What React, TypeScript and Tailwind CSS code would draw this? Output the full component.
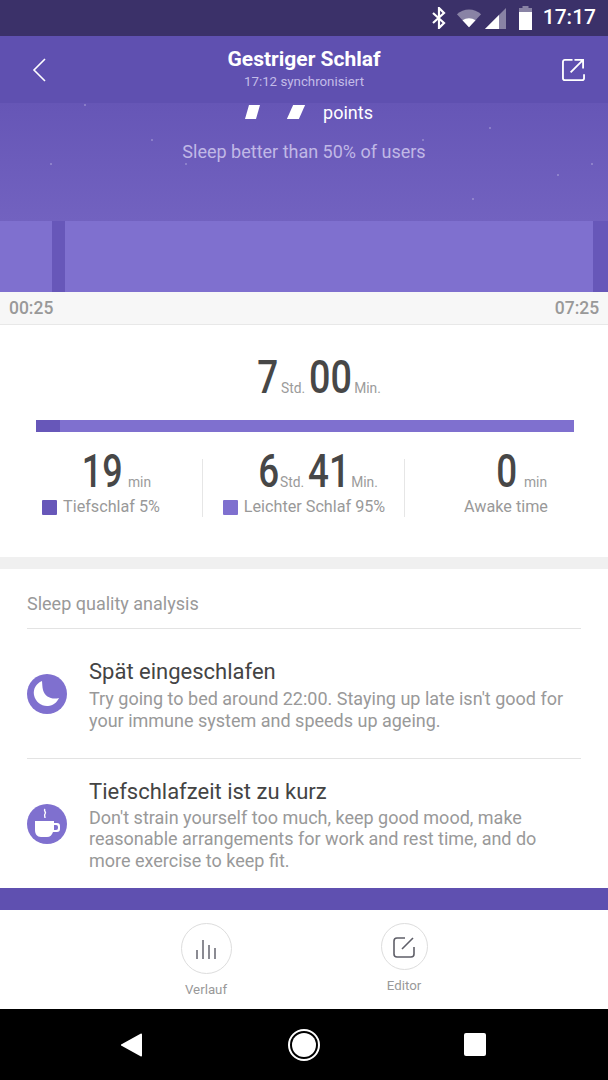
import React from "react";

const stars = [
  [84, 1],
  [50, 60],
  [151, 36],
  [185, 60],
  [422, 36],
  [489, 24],
  [557, 71],
  [591, 60],
  [472, 95],
];

const Num = ({ children, cls }: { children: React.ReactNode; cls: string }) => (
  <span className={`${cls} inline-block text-center text-[46px] leading-none font-medium text-[#474747]`}>
    {children}
  </span>
);

const Unit = ({ children, cls = "" }: { children: React.ReactNode; cls?: string }) => (
  <span className={`${cls} text-[15px] leading-none text-[#9b9b9b] scale-x-[0.92]`}>{children}</span>
);

const StatusIcons = () => (
  <div className="flex items-center gap-[5px] mr-[10px]">
    <svg width="14" height="22" viewBox="0 0 14 22" fill="none" stroke="white" strokeWidth="2.2" className="mr-[5px]">
      <path d="M1 6l11 10-5 5V1l5 5L1 16" />
    </svg>
    <svg width="26" height="20" viewBox="0 0 28 20">
      <path d="M1 6C8-1 20-1 27 6L14 20Z" fill="#fff" fillOpacity="0.4" />
      <path d="M7 12.500C11 9.500 17 9.500 21 12.500L14 20Z" fill="#fff" />
    </svg>
    <svg width="21" height="21" viewBox="0 0 21 21" className="-ml-[2px]">
      <path d="M21 0V21H0Z" fill="#fff" fillOpacity="0.4" />
      <path d="M14 7V21H0Z" fill="#fff" />
    </svg>
    <svg width="15" height="24" viewBox="0 0 15 24" className="ml-[7px]">
      <path d="M4.500 0H10.500V2H14V24H1V2H4.500Z" fill="#fff" fillOpacity="0.4" />
      <path d="M1 6H14V24H1Z" fill="#fff" />
    </svg>
  </div>
);

export default function App() {
  return (
    <div className="flex flex-col w-[608px] h-[1080px] bg-white overflow-hidden font-['Roboto',sans-serif]">
      {/* status bar */}
      <div className="flex items-center justify-end h-[36px] bg-[#3b3169] pr-[12px]">
        <StatusIcons />
        <span className="text-[21px] font-medium text-white">17:17</span>
      </div>

      {/* header */}
      <div className="relative z-10 grid grid-cols-[80px_1fr_80px] items-center h-[67px] bg-[#5f50b0]">
        <svg width="15" height="26" viewBox="0 0 15 26" fill="none" stroke="white" strokeWidth="1.600" className="ml-[32px]">
          <path d="M13 2L2 13l11 11" />
        </svg>
        <div className="flex flex-col items-center mt-[-2px]">
          <div className="text-[21px] leading-[26px] font-bold text-white">Gestriger Schlaf</div>
          <div className="text-[13.300px] leading-[20px] text-[#c3bce8]">17:12 synchronisiert</div>
        </div>
        <svg width="23" height="23" viewBox="0 0 24 24" fill="none" stroke="white" strokeWidth="1.900" className="justify-self-end mr-[23px]">
          <path d="M11 2H3a2 2 0 0 0-2 2v17a2 2 0 0 0 2 2h18a2 2 0 0 0 2-2V17" />
          <path d="M9 15L22 2M13 2h9v9" />
        </svg>
      </div>

      {/* score */}
      <div className="relative h-[118px] bg-gradient-to-b from-[#6656b6] to-[#7262c0]">
        {stars.map(([x, y]) => (
          <span
            key={x}
            className="absolute w-[2px] h-[2px] rounded-full bg-white/30"
            style={{ left: x, top: y }}
          />
        ))}
        <div className="flex items-center justify-center h-[16px] mt-[1px] pl-[8px]">
          <span className="w-[11px] h-[14px] bg-white -skew-x-[16deg] ml-[4px]" />
          <span className="w-[12px] h-[14px] bg-white -skew-x-[24deg] ml-[32px]" />
          <span className="text-[18px] leading-[18px] text-white ml-[21px] mt-[2px]">points</span>
        </div>
        <div className="text-center text-[18px] leading-[24px] text-[#c0b8e6] mt-[20px]">
          Sleep better than 50% of users
        </div>
      </div>

      {/* sleep chart */}
      <div className="flex h-[71px] bg-[#7f70cf]">
        <div className="w-[52px]" />
        <div className="w-[13px] bg-[#6757b9]" />
        <div className="flex-1" />
        <div className="w-[15px] bg-[#6757b9]" />
      </div>
      <div className="flex items-center justify-between h-[33px] px-[9px] bg-[#f7f7f7] border-b border-[#e8e8e8] text-[19px] font-medium text-[#999999]">
        <span className="scale-x-[0.92] origin-left">00:25</span>
        <span className="scale-x-[0.92] origin-right">07:25</span>
      </div>

      {/* summary */}
      <div className="flex flex-col h-[232px]">
        <div className="flex items-baseline justify-center gap-[1px] h-[46px] mt-[29px] pl-[29px]">
          <Num cls="w-[22px] scale-x-[0.8]">7</Num>
          <Unit cls="ml-[2px] mr-[-2.500px]">Std.</Unit>
          <Num cls="w-[44px] scale-x-[0.82]">00</Num>
          <Unit cls="ml-[3.500px]">Min.</Unit>
        </div>
        <div className="flex h-[12px] ml-[36px] mr-[34px] mt-[20px] bg-[#7f70cf]">
          <div className="w-[24px] bg-[#6757b9]" />
        </div>
        <div className="grid grid-cols-3 mt-[27px] h-[54px] px-[1px]">
          <div className="flex flex-col items-center border-r border-[#e6e6e6]">
            <div className="flex items-baseline gap-[5.500px] h-[46px] mt-[-11px] pl-[26px]">
              <Num cls="w-[44px] scale-x-[0.78]">19</Num>
              <Unit>min</Unit>
            </div>
            <div className="flex items-center gap-[6px] text-[16.200px] leading-[20px] text-[#999999] mt-[3px] ml-[-1px]">
              <span className="w-[15px] h-[15px] rounded-[1px] bg-[#6757b9]" />
              Tiefschlaf 5%
            </div>
          </div>
          <div className="flex flex-col items-center border-r border-[#e6e6e6]">
            <div className="flex items-baseline h-[46px] mt-[-11px] pl-[28px]">
              <Num cls="w-[22px] scale-x-[0.8]">6</Num>
              <Unit cls="ml-[1px] mr-[-1.500px]">Std.</Unit>
              <Num cls="w-[40px] scale-x-[0.8]">41</Num>
              <Unit cls="ml-[6.500px]">Min.</Unit>
            </div>
            <div className="flex items-center gap-[6px] text-[16.200px] leading-[20px] text-[#999999] mt-[3px] ml-[1px]">
              <span className="w-[15px] h-[15px] rounded-[1px] bg-[#7f70cf]" />
              Leichter Schlaf 95%
            </div>
          </div>
          <div className="flex flex-col items-center">
            <div className="flex items-baseline gap-[7px] h-[46px] mt-[-11px] pl-[30px]">
              <Num cls="w-[22px] scale-x-[0.8]">0</Num>
              <Unit>min</Unit>
            </div>
            <div className="text-[16.200px] leading-[20px] text-[#999999] mt-[3px]">Awake time</div>
          </div>
        </div>
      </div>

      <div className="h-[12px] bg-[#f0f0f0]" />

      {/* analysis */}
      <div className="flex flex-col h-[319px] px-[27px]">
        <div className="flex items-center h-[60px] pt-[10px] border-b border-[#e3e3e3] text-[18px] text-[#999999]">
          Sleep quality analysis
        </div>
        <div className="flex items-center gap-[22px] h-[130px] border-b border-[#e3e3e3]">
          <svg width="40" height="40" viewBox="0 0 40 40" className="shrink-0">
            <circle cx="20" cy="20" r="20" fill="#7f70cf" />
            <path d="M15 7C9 9.500 6 15 7 21c1.500 7 7.500 11.500 14 11 5-.5 9-3.500 11-8-7 2-14-1-16-8-.7-3-.7-6-1-9Z" fill="#fff" />
          </svg>
          <div className="flex-1">
            <div className="text-[22px] leading-[32px] text-[#444444]">Spät eingeschlafen</div>
            <div className="text-[18px] leading-[22px] text-[#999999]">
              Try going to bed around 22:00. Staying up late isn't good for your immune system and speeds up ageing.
            </div>
          </div>
        </div>
        <div className="flex items-center gap-[22px] flex-1">
          <svg width="40" height="40" viewBox="0 0 40 40" fill="none" className="shrink-0">
            <circle cx="20" cy="20" r="20" fill="#7f70cf" />
            <path d="M18 5c-2 2 2 3 0 5M18 10c-1 1 0 2 0 4" stroke="#fff" strokeWidth="1.400" />
            <path d="M8 17h19v2h3a3 3 0 0 1 3 3v3a3 3 0 0 1-3 3h-4c-1 3-3 5-6 5h-6c-4 0-6-3-6-7Z" fill="#fff" />
            <path d="M27 21h2a2 2 0 0 1 2 2v1a2 2 0 0 1-2 2h-2Z" fill="#7f70cf" />
          </svg>
          <div className="flex-1">
            <div className="text-[22px] leading-[31px] text-[#444444]">Tiefschlafzeit ist zu kurz</div>
            <div className="text-[18px] leading-[21.500px] text-[#999999]">
              Don't strain yourself too much, keep good mood, make reasonable arrangements for work and rest time, and do more exercise to keep fit.
            </div>
          </div>
        </div>
      </div>

      <div className="h-[22px] bg-[#5f50b0]" />

      {/* bottom actions */}
      <div className="flex justify-center gap-[98px] h-[99px] pt-[13px] pl-[2px]">
        <div className="flex flex-col items-center w-[100px]">
          <div className="flex items-center justify-center w-[51px] h-[51px] rounded-full border border-[#dddddd]">
            <svg width="22" height="20" viewBox="0 0 22 20" fill="none" stroke="#6f6f78" strokeWidth="1.600">
              <path d="M2 11v9M8 1v19M14 6v14M20 9v11" />
            </svg>
          </div>
          <span className="text-[13.300px] leading-[18px] text-[#999999] mt-[7px]">Verlauf</span>
        </div>
        <div className="flex flex-col items-center w-[100px]">
          <div className="flex items-center justify-center w-[47px] h-[47px] rounded-full border border-[#dddddd]">
            <svg width="22" height="22" viewBox="0 0 22 22" fill="none" stroke="#5f5f68" strokeWidth="1.600">
              <path d="M12 2H4a3 3 0 0 0-3 3v13a3 3 0 0 0 3 3h14a3 3 0 0 0 3-3V11" />
              <path d="M9 13L20 2" />
            </svg>
          </div>
          <span className="text-[13.300px] leading-[18px] text-[#999999] mt-[7px]">Editor</span>
        </div>
      </div>

      {/* nav bar */}
      <div className="flex-1 flex items-center justify-center bg-black pr-[2px]">
        <svg width="22" height="24" viewBox="0 0 22 24">
          <path d="M21 1.500V22.500a1 1 0 0 1-1.500.8L1 13a1 1 0 0 1 0-2L19.500.7A1 1 0 0 1 21 1.500Z" fill="#fff" />
        </svg>
        <div className="flex items-center justify-center w-[32px] h-[32px] rounded-full border-2 border-white ml-[145px] mr-[144px]">
          <div className="w-[24px] h-[24px] rounded-full bg-white" />
        </div>
        <div className="w-[22px] h-[23px] rounded-[2px] bg-white" />
      </div>
    </div>
  );
}
